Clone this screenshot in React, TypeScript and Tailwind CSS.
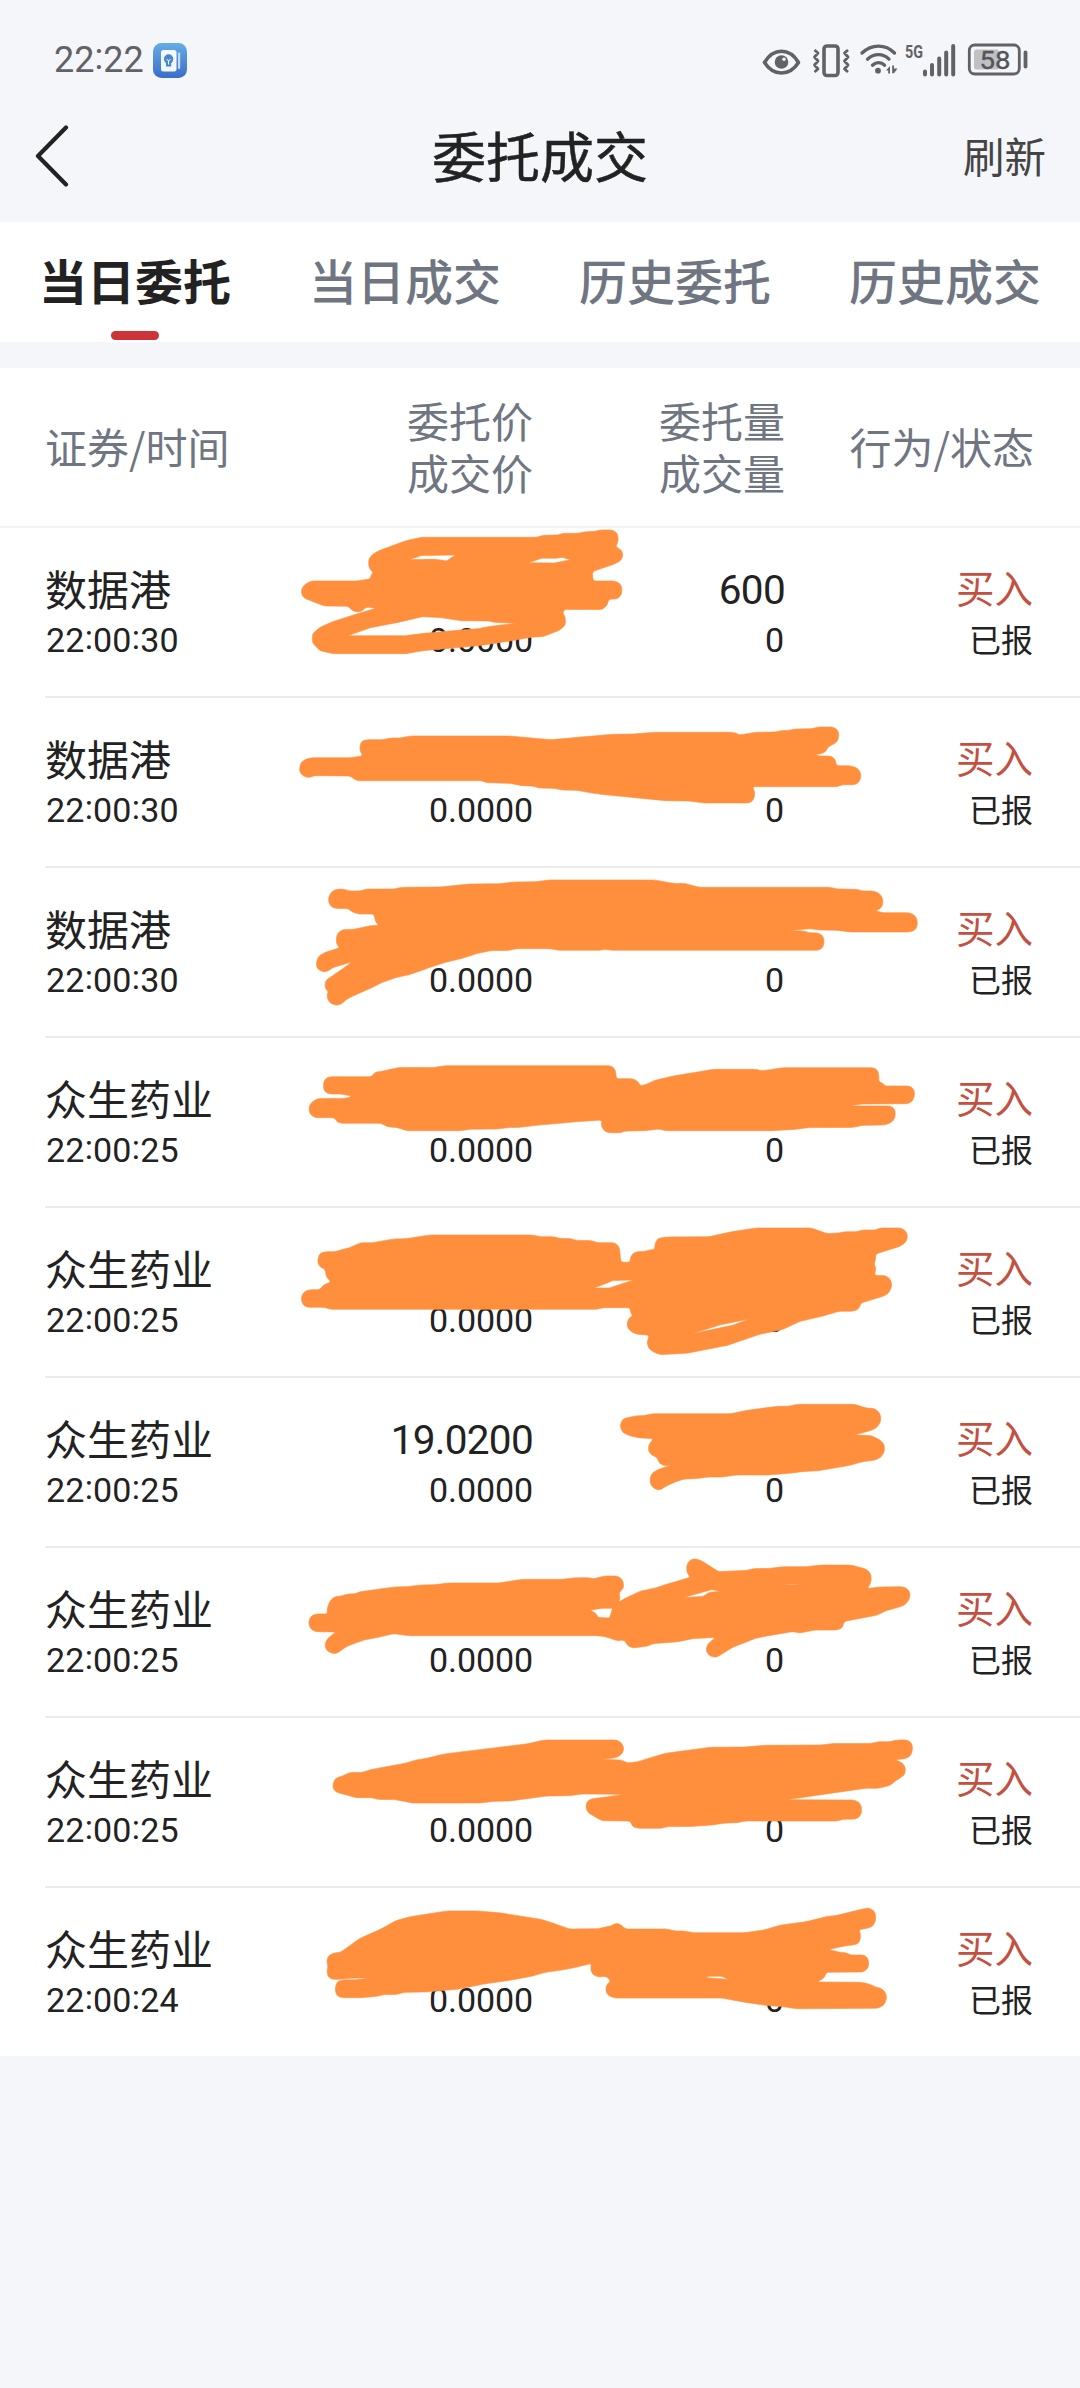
const LATIN = 'font-["Roboto","Noto_Sans_CJK_SC",sans-serif]';
const CJK = 'font-["Noto_Sans_CJK_SC",sans-serif]';

type Order = {
  name: string;
  time: string;
  price?: string;
  amount?: string;
};

const orders: Order[] = [
  { name: "数据港", time: "22:00:30", amount: "600" },
  { name: "数据港", time: "22:00:30" },
  { name: "数据港", time: "22:00:30" },
  { name: "众生药业", time: "22:00:25" },
  { name: "众生药业", time: "22:00:25" },
  { name: "众生药业", time: "22:00:25", price: "19.0200" },
  { name: "众生药业", time: "22:00:25" },
  { name: "众生药业", time: "22:00:25" },
  { name: "众生药业", time: "22:00:24" },
];

const tabs = ["当日委托", "当日成交", "历史委托", "历史成交"];

/* Marker outlines: `top` is the y offset of the block; points are in marker units. */
const SX = 0.42092;
const SY = 1 / 3;

type Marker = { top: number; pts: string; holes?: string[] };

const markers: Marker[] = [
  {
    top: -8,
    pts: "210,130 212,115 220,103 235,92 300,62 335,52 610,52 625,46 660,45 672,40 708,40 722,36 748,34 760,30 790,30 800,38 803,48 803,66 797,80 808,87 814,98 814,112 808,124 790,134 742,155 744,183 795,183 808,190 812,203 812,218 808,230 800,237 780,238 778,255 765,269 675,268 672,280 678,292 678,315 665,330 625,350 600,351 560,360 480,376 385,387 340,392 300,401 125,401 95,392 77,368 77,342 95,322 125,305 180,283 228,265 204,261 195,273 185,276 172,273 163,259 105,258 75,243 58,235 51,223 51,207 60,192 75,183 180,183 215,177 216,165 222,157 213,147",
    holes: [
      "306,119 335,107 417,105 395,123 370,118 340,118",
      "590,128 622,115 655,115 670,112 690,119 652,129",
      "162,347 215,323 285,306 338,290 382,293 430,302 495,303 512,307 560,310 500,319 470,326 430,330 350,339 298,347",
    ],
  },
  {
    top: -8,
    pts: "190,692 190,675 195,663 205,659 245,659 262,654 285,654 310,648 545,648 642,659 790,643 840,642 890,637 1075,637 1085,640 1092,645 1130,637 1175,636 1190,632 1210,631 1222,627 1265,626 1278,621 1315,621 1325,630 1328,645 1325,663 1315,673 1302,680 1298,693 1288,701 1272,703 1280,708 1308,708 1318,716 1322,737 1355,737 1370,743 1379,755 1380,772 1375,788 1365,794 1335,794 1325,800 1122,800 1127,812 1128,826 1124,841 1115,849 1005,849 975,843 915,842 755,822 705,811 670,810 650,805 615,804 600,798 575,797 545,790 490,788 480,782 185,782 175,777 168,768 80,767 70,773 58,770 48,760 46,745 50,728 60,718 75,713 165,713 197,708",
  },
  {
    top: 332,
    pts: "115,125 116,110 123,95 133,88 150,87 165,93 190,93 205,87 270,87 290,82 380,81 450,72 525,71 555,66 610,65 640,60 890,60 935,70 965,71 995,82 1305,82 1325,87 1370,88 1385,93 1410,93 1424,100 1432,115 1432,135 1425,147 1415,153 1435,158 1495,158 1508,166 1514,180 1514,198 1508,211 1495,216 1355,216 1325,211 1285,210 1257,206 1215,211 1245,213 1255,218 1280,219 1290,228 1293,243 1290,262 1280,271 790,271 772,268 760,271 665,271 640,266 560,266 545,271 500,272 470,280 430,296 390,308 350,325 310,343 275,353 240,369 215,385 180,404 158,418 145,433 133,436 120,430 113,418 112,402 115,395 107,385 108,362 125,347 150,325 172,305 125,323 115,333 102,336 90,328 86,315 88,298 95,285 108,277 142,263 134,252 134,230 140,215 150,209 175,208 215,197 235,196 227,185 223,162 185,162 170,155 163,146 130,145 120,138",
  },
  {
    top: 332,
    pts: "103,685 104,665 110,654 120,650 218,650 225,637 245,633 280,623 370,622 390,617 785,617 795,625 798,640 799,656 838,656 850,664 856,678 870,673 890,661 935,648 1030,628 1130,628 1145,632 1165,629 1195,623 1410,623 1420,631 1423,648 1422,665 1433,670 1437,678 1495,678 1505,686 1508,700 1504,722 1492,731 1380,732 1355,738 1450,738 1460,746 1462,765 1458,781 1448,790 1436,795 1385,796 1360,802 1255,803 1225,808 1170,812 915,812 900,807 870,812 820,813 810,818 780,818 770,812 763,798 765,780 715,784 690,787 610,796 570,802 540,803 520,807 450,808 430,812 300,812 280,803 255,800 240,790 145,790 135,785 130,773 85,773 73,765 69,752 70,735 78,724 90,716 155,715 172,709 145,702 118,702 108,697",
  },
  {
    top: 672,
    pts: "90,190 90,175 95,160 107,155 130,155 165,143 192,128 220,128 270,117 300,116 355,105 600,105 620,110 650,110 665,115 690,116 705,121 740,122 755,128 795,128 804,137 807,150 810,187 832,187 833,170 840,159 850,155 870,154 878,149 890,149 891,130 897,117 905,113 920,111 1020,110 1070,96 1130,84 1262,84 1300,101 1330,99 1340,95 1370,95 1385,90 1415,90 1425,84 1475,84 1486,92 1491,105 1489,122 1480,134 1468,141 1415,162 1415,178 1411,192 1416,205 1412,226 1437,227 1448,234 1453,247 1453,262 1446,279 1435,288 1380,309 1377,322 1370,331 1358,334 1328,334 1290,348 1235,364 1195,388 1140,403 1060,437 970,459 905,464 888,457 876,445 872,428 877,405 850,403 835,396 825,382 825,365 830,353 838,348 832,335 832,323 765,323 755,328 120,328 105,322 65,322 55,315 51,302 51,288 58,275 70,269 95,269 103,255 121,246 110,230 107,207 97,203",
    holes: ["745,264 775,250 790,242 840,240 782,264", "976,402 1045,375 1114,357 1075,376"],
  },
  {
    top: 672,
    pts: "809,685 809,670 815,657 825,653 848,647 865,647 885,641 1073,641 1105,632 1180,619 1205,619 1230,613 1365,613 1395,625 1410,625 1422,634 1427,648 1427,665 1418,683 1405,691 1365,705 1405,707 1426,720 1436,735 1436,755 1428,771 1415,780 1385,785 1350,797 1280,812 1240,815 1210,820 1160,825 1085,825 1050,831 1015,831 990,836 960,837 935,848 915,860 905,869 895,869 883,860 879,845 880,830 887,816 900,808 932,794 915,798 902,791 895,771 883,766 875,752 876,735 887,716 855,714 830,707 815,698",
  },
  {
    top: 1012,
    pts: "112,215 113,200 120,180 130,170 150,167 160,162 180,161 188,156 270,141 300,140 335,135 370,134 400,129 520,129 575,118 670,118 705,113 735,113 745,117 770,108 800,108 811,115 816,128 816,145 805,158 808,175 804,187 820,175 855,154 895,143 915,134 975,112 967,98 966,80 970,65 980,57 990,57 1002,63 1042,95 1110,91 1125,86 1165,85 1195,80 1250,80 1285,75 1355,75 1375,81 1393,88 1403,100 1405,118 1402,133 1395,146 1425,141 1480,140 1492,148 1497,160 1496,175 1488,191 1475,200 1438,213 1420,225 1340,244 1338,258 1333,266 1320,270 1270,270 1235,279 1218,275 1165,286 1130,295 1075,322 1040,350 1030,352 1018,345 1012,330 1016,312 1035,292 980,296 945,305 885,311 875,318 838,324 826,317 818,300 800,302 775,291 755,287 305,287 270,281 240,290 200,300 160,318 135,340 125,341 112,333 107,320 109,302 118,290 133,276 85,275 73,267 69,255 69,240 75,227 85,222 112,222",
    holes: ["737,210 765,205 790,205 783,234 756,232 750,220", "957,173 1025,149 1048,154 1020,157 1005,169", "1190,134 1215,132 1238,134"],
  },
  {
    top: 1192,
    pts: "126,205 126,190 132,175 148,168 165,158 197,157 215,149 300,129 325,119 345,116 390,102 590,71 628,60 800,60 811,68 816,80 816,93 810,105 798,113 765,118 812,120 825,129 850,125 915,100 1020,82 1105,81 1150,76 1285,75 1310,71 1408,70 1420,65 1450,65 1465,60 1490,60 1499,67 1503,80 1502,95 1497,109 1485,116 1462,119 1480,130 1486,145 1484,165 1465,180 1450,196 1420,205 1390,205 1205,239 1362,240 1374,245 1381,257 1382,275 1378,290 1368,297 1335,298 1325,303 1105,303 1085,308 1060,309 1025,315 985,319 920,320 905,325 850,325 838,320 832,303 765,302 745,288 732,278 727,265 728,248 737,237 770,232 815,223 715,222 690,227 635,228 545,243 510,244 475,249 315,249 275,239 230,238 220,233 180,233 165,227 145,221 132,215",
  },
  {
    top: 1192,
    pts: "112,732 112,715 119,703 130,699 145,696 190,655 240,627 275,602 310,590 395,573 470,573 520,578 620,598 650,610 688,627 755,626 785,618 800,609 812,616 820,627 918,627 940,633 960,633 982,638 1105,638 1150,630 1190,615 1250,605 1305,588 1320,587 1385,567 1397,564 1409,569 1415,582 1415,602 1408,619 1395,625 1375,629 1379,640 1379,658 1373,672 1360,675 1345,677 1325,683 1303,688 1330,697 1345,698 1355,705 1387,705 1396,713 1399,727 1397,745 1385,756 1298,757 1292,775 1275,786 1380,787 1400,792 1415,801 1430,806 1440,820 1441,838 1435,855 1420,865 1225,866 1195,860 1160,857 1110,848 1050,834 795,834 780,827 774,813 775,797 786,782 775,769 755,771 742,762 738,748 740,730 700,743 670,750 630,757 600,768 545,781 490,791 420,808 345,816 295,817 280,823 245,824 230,829 195,833 148,833 136,828 131,812 132,798 137,784 147,780 185,779 215,774 175,774 140,778 123,778 113,768 112,750 114,740",
    holes: ["1010,773 1020,769 1050,769 1065,778"],
  },
];

function roundedPath(points: string, top: number, radius: number) {
  const pts = points.split(" ").map((pair) => {
    const [x, y] = pair.split(",").map(Number);
    return [280 + x * SX, top + y * SY];
  });
  const n = pts.length;
  const toward = (a: number[], b: number[]) => {
    const len = Math.hypot(b[0] - a[0], b[1] - a[1]) || 1;
    const t = Math.min(0.5, radius / len);
    return `${(a[0] + (b[0] - a[0]) * t).toFixed(1)} ${(a[1] + (b[1] - a[1]) * t).toFixed(1)}`;
  };
  let d = "";
  pts.forEach((p, i) => {
    const prev = pts[(i + n - 1) % n];
    const next = pts[(i + 1) % n];
    d += `${i === 0 ? "M" : "L"}${toward(p, prev)} Q${p[0].toFixed(1)} ${p[1].toFixed(1)} ${toward(p, next)} `;
  });
  return d + "Z";
}

function MarkerLayer() {
  return (
    <svg className="pointer-events-none absolute left-0 top-0" width="1080" height="1528" viewBox="0 0 1080 1528">
      {markers.map((m, i) => (
        <path
          key={i}
          fill="#ff8f3c"
          stroke="#ff8f3c"
          strokeWidth="0.6"
          strokeLinejoin="round"
          fillRule="evenodd"
          d={[roundedPath(m.pts, m.top, 2.5), ...(m.holes ?? []).map((h) => roundedPath(h, m.top, 1))].join(" ")}
        />
      ))}
    </svg>
  );
}

function AppBadge() {
  return (
    <svg width="34" height="35" viewBox="0 0 34 35">
      <defs>
        <linearGradient id="badge" x1="0" y1="0" x2="0" y2="1">
          <stop offset="0" stopColor="#66ade6" />
          <stop offset="1" stopColor="#3a6dc8" />
        </linearGradient>
      </defs>
      <rect width="34" height="35" rx="8.5" fill="url(#badge)" />
      <rect x="8" y="7" width="15.5" height="21.5" rx="2.5" fill="#f2f8ff" />
      <rect x="25" y="9.500" width="2.200" height="16.500" rx="1" fill="#c4dcf7" />
      <circle cx="15.600" cy="16" r="4.700" fill="#4a86cf" />
      <path d="M13 19h5.200v4.500H13z" fill="#4a86cf" />
      <path d="M13.600 16l2 2 2-2M15.600 18v3.500" stroke="#fff" strokeWidth="1" fill="none" />
    </svg>
  );
}

function StatusIcons() {
  return (
    <svg width="270" height="40" viewBox="760 40 270 40" fill="none" stroke="#626266">
      <path d="M764.500 62.500C769 55 775 51.300 781.500 51.300S794 55 798.500 62.500C794 69.500 788 73 781.500 73S769 69.500 764.500 62.500Z" strokeWidth="3.600" strokeLinejoin="round" />
      <circle cx="781.500" cy="62" r="6.800" fill="#626266" stroke="none" />
      <circle cx="784" cy="59.300" r="1.700" fill="#f4f6fa" stroke="none" />
      <rect x="824" y="46" width="14" height="29.500" rx="3" strokeWidth="3.600" />
      <path d="M814.500 50l3.500 3-3.500 4 3.500 4-3.500 4 3.500 4-3.500 3M848 50l-3.500 3 3.500 4-3.500 4 3.500 4-3.500 4 3.500 3" strokeWidth="2.800" strokeLinejoin="round" />
      <path d="M862 53c9.500-9.300 23.500-9.300 32.500 0M867.500 59.200c6.500-6 15.500-6 21.500 0M872.500 65.200c3.700-3.500 8.700-3.500 12 0" strokeWidth="3.300" strokeLinecap="round" />
      <circle cx="878" cy="70.700" r="2.900" fill="#626266" stroke="none" />
      <path d="M886 70.500l4-4.500v7.500h-1.800v-3zM892.200 65.500h1.800v3h3.500l-3.500 4.700h-1.800z" fill="#626266" stroke="none" />
      <text x="905" y="57.500" fontSize="19" fontWeight="700" fill="#626266" stroke="none" textLength="18" lengthAdjust="spacingAndGlyphs" fontFamily="Roboto, sans-serif">5G</text>
      <path d="M925 71.500v3M932 65v9.500M939.200 58.500v16M946.200 52.500v22M953.200 46v28.500" strokeWidth="4" strokeLinecap="round" />
      <rect x="969.300" y="45" width="50" height="29" rx="5.500" strokeWidth="2.800" />
      <rect x="974" y="49.500" width="25" height="20" rx="2.500" fill="#c0c1c4" stroke="none" />
      <text x="979.500" y="69" fontSize="26.500" fill="#555558" stroke="#555558" strokeWidth="0.400" textLength="31" lengthAdjust="spacingAndGlyphs" fontFamily="Roboto, sans-serif">58</text>
      <path d="M1025.500 52.500v14" strokeWidth="3.800" strokeLinecap="round" />
    </svg>
  );
}

/* Clock text with its colons centred on the height of the digits. */
function Clock({ value }: { value: string }) {
  return (
    <>
      {value.split(/(:)/).map((part, i) =>
        part === ":" ? (
          <span key={i} className="relative -top-[3px]">:</span>
        ) : (
          <span key={i}>{part}</span>
        ),
      )}
    </>
  );
}

function OrderRow({ order, last }: { order: Order; last: boolean }) {
  return (
    <div className={`ml-[45px] grid grid-cols-[190px_298px_252px_249px] pt-[36px] text-[#222222] ${last ? "h-[168px]" : "h-[170px] border-b-2 border-[#ebebeb]"}`}>
      <div>
        <div className="h-[50px] text-[42px] leading-[48px]">{order.name}</div>
        <div className={`pl-px text-[34px] leading-[52px] tracking-[0.2px] ${LATIN}`}>
          <Clock value={order.time} />
        </div>
      </div>
      <div className={`text-right ${LATIN}`}>
        <div className="h-[50px] text-[40.500px] leading-[52px] tracking-[-0.7px]">{order.price}</div>
        <div className="text-[34px] leading-[52px] tracking-[-0.100px]">0.0000</div>
      </div>
      <div className={`text-right ${LATIN}`}>
        <div className="h-[50px] text-[40.500px] leading-[52px] tracking-[-0.7px]">{order.amount}</div>
        <div className="pr-px text-[34px] leading-[52px]">0</div>
      </div>
      <div className="pr-px text-right">
        <div className="h-[50px] text-[38.500px] leading-[45px] text-[#c4503f]">买入</div>
        <div className="text-[32px] leading-[48px]">已报</div>
      </div>
    </div>
  );
}

export default function App() {
  return (
    <div className={`min-h-[2388px] w-[1080px] bg-[#f4f6fa] ${CJK}`}>
      <header className="h-[222px]">
        <div className="flex h-[120px] items-center justify-between pl-[54px] pr-[50px]">
          <div className="flex items-center gap-[9px]">
            <span className={`text-[36px] leading-none text-[#626266] ${LATIN}`}>
              <Clock value="22:22" />
            </span>
            <AppBadge />
          </div>
          <StatusIcons />
        </div>
        <div className="grid h-[70px] grid-cols-[1fr_auto_1fr] items-center pl-[34px] pr-[34px]">
          <svg width="36" height="64" viewBox="0 0 36 64" fill="none">
            <path d="M32 4.500L4 33L32 61.500" stroke="#222222" strokeWidth="4.200" strokeLinecap="round" strokeLinejoin="round" />
          </svg>
          <h1 className="text-[54px] leading-[70px] text-[#222222] [-webkit-text-stroke:0.5px_#222222]">委托成交</h1>
          <button className="justify-self-end text-[41.500px] leading-[70px] text-[#444444]">刷新</button>
        </div>
      </header>

      <nav className="grid h-[120px] grid-cols-4 bg-white">
        {tabs.map((tab, i) => (
          <div key={tab} className="flex flex-col items-center">
            <span className={`h-[109px] text-[48px] leading-[115px] ${i === 0 ? "font-bold text-[#222222]" : "font-medium text-[#6f7682]"}`}>{tab}</span>
            {i === 0 && <span className="h-[9px] w-[48px] rounded-full bg-[#cc3437]" />}
          </div>
        ))}
      </nav>

      <main className="mt-[26px] bg-white">
        <div className="grid h-[160px] grid-cols-[190px_298px_252px_249px] items-center border-b-2 border-[#f4f4f5] pb-[3px] pl-[45px] text-[42px] leading-[52px] text-[#6f7682]">
          <div className="whitespace-nowrap">证券/时间</div>
          <div className="text-right">委托价<br />成交价</div>
          <div className="text-right">委托量<br />成交量</div>
          <div className="text-right">行为/状态</div>
        </div>
        <div className="relative">
          {orders.map((order, i) => (
            <OrderRow key={i} order={order} last={i === orders.length - 1} />
          ))}
          <MarkerLayer />
        </div>
      </main>
    </div>
  );
}
